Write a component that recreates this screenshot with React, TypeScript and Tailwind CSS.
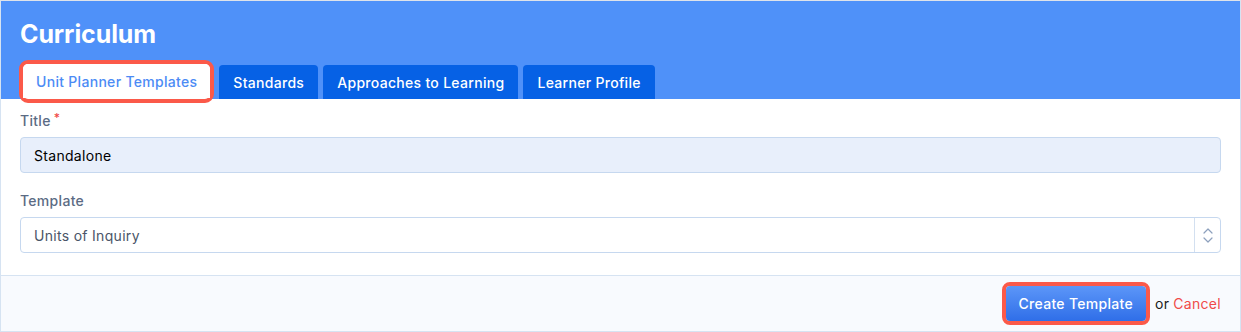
export default function App() {
  const tabs = ['Standards', 'Approaches to Learning', 'Learner Profile'];

  return (
    <div className="w-[1241px] h-[332px] bg-white font-['Inter',sans-serif] text-[14px] tracking-[0.3px]">
      <div className="h-full border border-[#d6e3f2] border-t-[#dfe3ea] flex flex-col">
        {/* Header */}
        <div className="h-[98px] bg-[#4f91f9] px-[19px] flex flex-col">
          <h1 className="mt-[16px] text-[25px] leading-[34px] font-bold text-white tracking-[-0.1px]">Curriculum</h1>
          <div className="mt-auto flex items-end gap-[5px]">
            <div className="rounded-[9px] border-[4px] border-[#fb5949] -mb-[4px] pb-[1px] bg-white -ml-[1px]">
              <div className="h-[34px] px-[13px] flex items-center bg-white rounded-t-[5px] text-[#4c8bf5] font-medium">
                Unit Planner Templates
              </div>
            </div>
            {tabs.map((t) => (
              <div
                key={t}
                className="h-[34px] px-[14px] flex items-center bg-[#0661e5] rounded-t-[4px] text-white font-medium"
              >
                {t}
              </div>
            ))}
          </div>
        </div>

        {/* Body */}
        <div className="px-[19px] pt-[12px] pb-[22px] flex flex-col">
          <label className="leading-[20px] font-medium text-[#5b6b84] flex items-start gap-[3px]">
            Title<span className="text-[#f04a48] text-[12px] leading-[14px]">*</span>
          </label>
          <div className="mt-[6px] h-[36px] rounded-[4px] border border-[#c6d8ef] bg-[#e8effb] px-[13px] flex items-center text-black">
            Standalone
          </div>

          <label className="mt-[18px] leading-[20px] font-medium text-[#5b6b84]">Template</label>
          <div className="mt-[6px] h-[36px] rounded-[4px] border border-[#c6d8ef] bg-white flex items-stretch">
            <div className="flex-1 px-[13px] flex items-center text-[#4a5568]">Units of Inquiry</div>
            <div className="w-[26px] border-l border-[#d3e0f0] flex flex-col items-center justify-center gap-[3px]">
              <svg width="10" height="6" viewBox="0 0 10 6" fill="none">
                <path d="M1 5L5 1L9 5" stroke="#8da0bd" strokeWidth="1.2" strokeLinecap="round" strokeLinejoin="round" />
              </svg>
              <svg width="10" height="6" viewBox="0 0 10 6" fill="none">
                <path d="M1 1L5 5L9 1" stroke="#8da0bd" strokeWidth="1.2" strokeLinecap="round" strokeLinejoin="round" />
              </svg>
            </div>
          </div>
        </div>

        {/* Footer */}
        <div className="flex-1 border-t border-[#d6e3f2] bg-[#f8fafe] px-[19px] flex items-center justify-end gap-[4px]">
          <div className="rounded-[8px] border-[4px] border-[#fb5949] mr-[1px]">
            <button className="h-[35px] px-[13px] rounded-[4px] bg-gradient-to-b from-[#5c96f8] to-[#2f6ee8] text-white font-medium tracking-[0.3px]">
              Create Template
            </button>
          </div>
          <span className="text-[#1a1a1a]">or</span>
          <span className="text-[#f04a48]">Cancel</span>
        </div>
      </div>
    </div>
  );
}
